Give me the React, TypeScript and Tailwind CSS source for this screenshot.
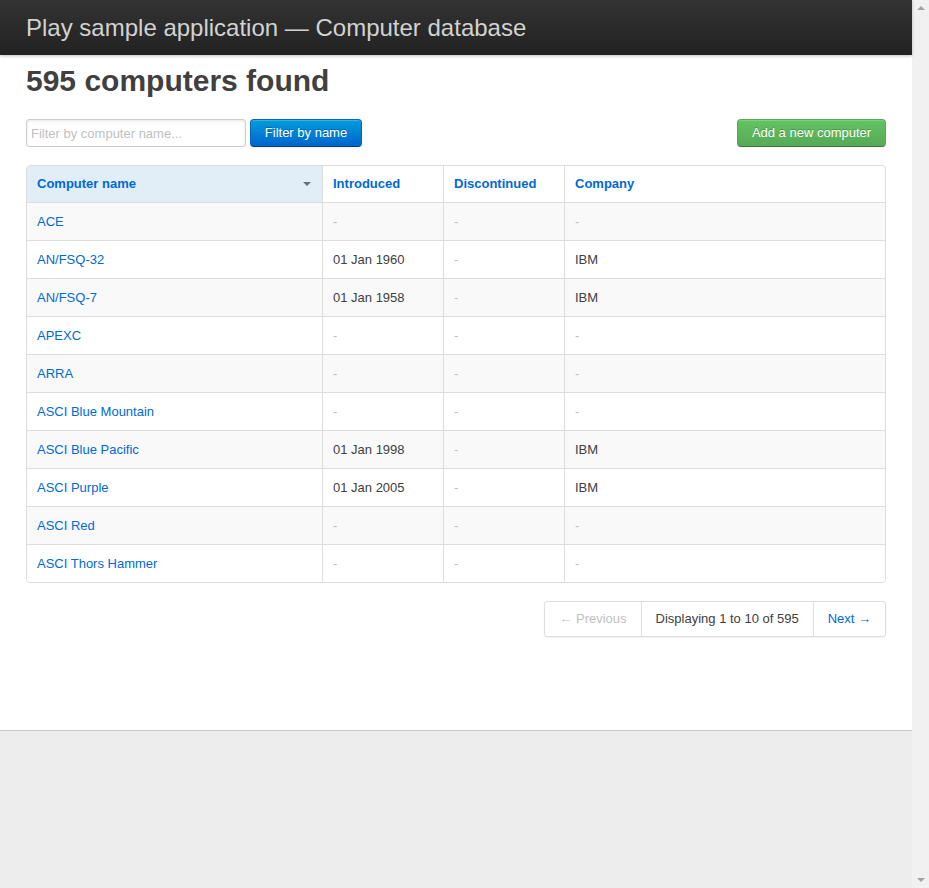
import React from "react";

type Row = { name: string; intro?: string; disc?: string; company?: string };

const rows: Row[] = [
  { name: "ACE" },
  { name: "AN/FSQ-32", intro: "01 Jan 1960", company: "IBM" },
  { name: "AN/FSQ-7", intro: "01 Jan 1958", company: "IBM" },
  { name: "APEXC" },
  { name: "ARRA" },
  { name: "ASCI Blue Mountain" },
  { name: "ASCI Blue Pacific", intro: "01 Jan 1998", company: "IBM" },
  { name: "ASCI Purple", intro: "01 Jan 2005", company: "IBM" },
  { name: "ASCI Red" },
  { name: "ASCI Thors Hammer" },
];

function Val({ v }: { v?: string }) {
  if (!v) return <span className="text-[#bfbfbf]">-</span>;
  return <span className="text-[#404040]">{v}</span>;
}

export default function App() {
  return (
    <div
      className="flex h-[888px] w-[929px] overflow-hidden text-[13px] leading-[18px] text-[#404040]"
      style={{ fontFamily: '"Liberation Sans", Arial, Helvetica, sans-serif' }}
    >
      <div className="flex w-[912px] flex-col bg-[#ededed]">
        <div className="h-[731px] border-b border-[#cccccc] bg-white">
          <header className="relative z-10 flex h-[55px] items-center bg-linear-to-b from-[#333333] to-[#222222] pl-[26px] shadow-[0_1px_3px_rgba(0,0,0,0.25)]">
            <h1 className="pt-[1px] text-[24px] font-normal leading-normal text-[#d2d2d2]">
              Play sample application — Computer database
            </h1>
          </header>
          <main className="px-[26px]">
            <h1 className="mt-[8px] text-[30px] font-bold leading-[36px] text-[#404040]">
              595 computers found
            </h1>
            <div className="mt-[20px] flex h-[28px] items-center">
              <input
                type="search"
                placeholder="Filter by computer name..."
                className="h-[28px] w-[220px] rounded-[3px] border border-[#cccccc] px-[4px] text-[13px] text-[#808080] shadow-[inset_0_1px_3px_rgba(0,0,0,0.1)] outline-none placeholder:text-[#bfbfbf]"
              />
              <button className="ml-[4px] h-[28px] w-[112px] rounded-[4px] border border-[#0064cd] border-b-[#003f81] bg-linear-to-b from-[#049cdb] to-[#0064cd] text-[13px] text-white shadow-[inset_0_1px_0_rgba(255,255,255,0.2),0_1px_2px_rgba(0,0,0,0.05)] text-shadow-[0_-1px_0_rgb(0_0_0/0.25)]">
                Filter by name
              </button>
              <button className="ml-auto h-[28px] w-[149px] rounded-[4px] border border-[#57a957] border-b-[#3d773d] bg-linear-to-b from-[#62c462] to-[#57a957] text-[13px] text-white shadow-[inset_0_1px_0_rgba(255,255,255,0.2),0_1px_2px_rgba(0,0,0,0.05)] text-shadow-[0_-1px_0_rgb(0_0_0/0.25)]">
                Add a new computer
              </button>
            </div>

            <table className="mt-[18px] w-[860px] table-fixed border-separate border-spacing-0 rounded-[4px] border border-[#dddddd]">
              <colgroup>
                <col className="w-[295px]" />
                <col className="w-[121px]" />
                <col className="w-[121px]" />
                <col className="w-[321px]" />
              </colgroup>
              <thead>
                <tr>
                  <th className="rounded-tl-[4px] bg-[#e1eef7] px-[10px] pt-[9px] pb-[10px] text-left text-[13px] font-bold leading-[17px]">
                    <div className="flex items-center justify-between">
                      <span className="text-[#0069d6]">Computer name</span>
                      <span className="mr-[1px] h-0 w-0 border-x-[4px] border-t-[4px] border-x-transparent border-t-[#6b7075]" />
                    </div>
                  </th>
                  <th className="border-l border-[#dddddd] px-[10px] pt-[9px] pb-[10px] text-left text-[13px] font-bold leading-[17px] text-[#0069d6]">
                    Introduced
                  </th>
                  <th className="border-l border-[#dddddd] px-[10px] pt-[9px] pb-[10px] text-left text-[13px] font-bold leading-[17px] text-[#0069d6]">
                    Discontinued
                  </th>
                  <th className="border-l border-[#dddddd] px-[10px] pt-[9px] pb-[10px] text-left text-[13px] font-bold leading-[17px] text-[#0069d6]">
                    Company
                  </th>
                </tr>
              </thead>
              <tbody>
                {rows.map((r, i) => {
                  const bg = i % 2 === 0 ? "bg-[#f9f9f9]" : "bg-white";
                  const last = i === rows.length - 1;
                  return (
                    <tr key={r.name} className={bg}>
                      <td className={`border-t border-[#dddddd] px-[10px] py-[10px] leading-[17px] ${last ? "rounded-bl-[4px]" : ""}`}>
                        <a href="#" className="text-[#0069d6]">
                          {r.name}
                        </a>
                      </td>
                      <td className="border-l border-t border-[#dddddd] px-[10px] py-[10px] leading-[17px]">
                        <Val v={r.intro} />
                      </td>
                      <td className="border-l border-t border-[#dddddd] px-[10px] py-[10px] leading-[17px]">
                        <Val v={r.disc} />
                      </td>
                      <td className={`border-l border-t border-[#dddddd] px-[10px] py-[10px] leading-[17px] ${last ? "rounded-br-[4px]" : ""}`}>
                        <Val v={r.company} />
                      </td>
                    </tr>
                  );
                })}
              </tbody>
            </table>

            <div className="mt-[18px] flex justify-end">
              <ul className="flex h-[36px] rounded-[3px] border border-[#dddddd] shadow-[0_1px_2px_rgba(0,0,0,0.05)]">
                <li className="border-r border-[#dddddd] px-[14px] leading-[34px] text-[#bfbfbf]">
                  ← Previous
                </li>
                <li className="border-r border-[#dddddd] px-[14px] leading-[34px] text-[#404040]">
                  Displaying 1 to 10 of 595
                </li>
                <li className="px-[14px] leading-[34px]">
                  <a href="#" className="text-[#0069d6]">
                    Next →
                  </a>
                </li>
              </ul>
            </div>
          </main>
        </div>
      </div>
      <div className="flex w-[17px] flex-col items-center justify-between bg-[#f1f1f1] py-[6px]">
        <span className="h-0 w-0 border-x-[4px] border-b-[4px] border-x-transparent border-b-[#a3a3a3]" />
        <span className="h-0 w-0 border-x-[4px] border-t-[4px] border-x-transparent border-t-[#a3a3a3]" />
      </div>
    </div>
  );
}
